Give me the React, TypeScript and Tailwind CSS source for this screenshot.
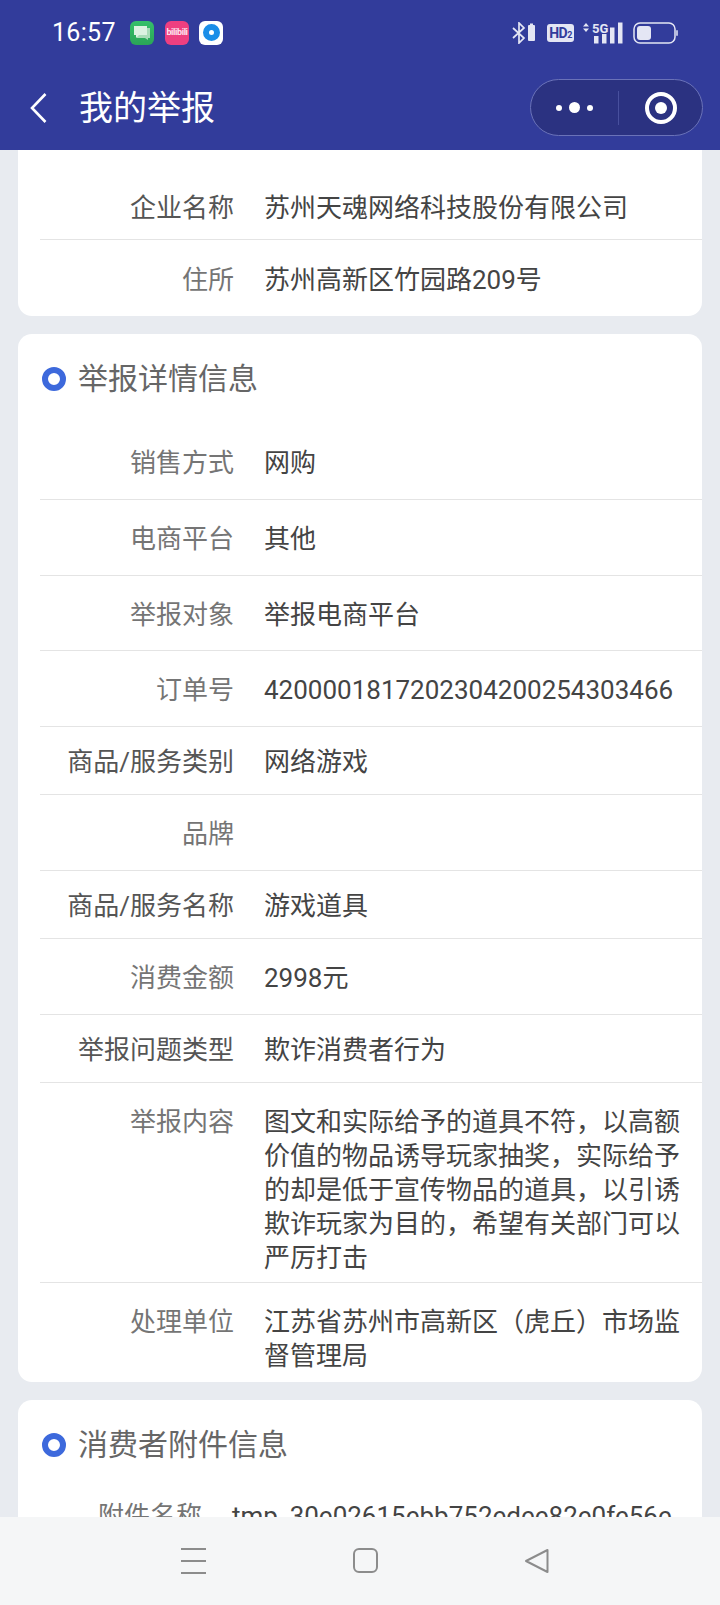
const rowsTop = [
  { label: "企业名称", value: "苏州天魂网络科技股份有限公司", size: "h-[76px] pt-[12px]", textColor: "text-[#555]" },
  { label: "住所", value: "苏州高新区竹园路209号", size: "h-[76px] pt-[3px]", last: true },
];

const rowsDetail = [
  { label: "销售方式", value: "网购", size: "h-[76px] pt-[3px]" },
  { label: "电商平台", value: "其他", size: "h-[76px] pt-[3px]" },
  { label: "举报对象", value: "举报电商平台", size: "h-[75px] pt-[3px]" },
  { label: "订单号", value: "4200001817202304200254303466", size: "h-[76px] pt-[3px]" },
  { label: "商品/服务类别", value: "网络游戏", size: "h-[68px] pt-[3px]", textColor: "text-[#555]" },
  { label: "品牌", value: "", size: "h-[76px] pt-[3px]" },
  { label: "商品/服务名称", value: "游戏道具", size: "h-[68px] pt-[3px]", textColor: "text-[#555]" },
  { label: "消费金额", value: "2998元", size: "h-[76px] pt-[3px]" },
  { label: "举报问题类型", value: "欺诈消费者行为", size: "h-[68px] pt-[3px]", textColor: "text-[#555]" },
  {
    label: "举报内容",
    value: "图文和实际给予的道具不符，以高额价值的物品诱导玩家抽奖，实际给予的却是低于宣传物品的道具，以引诱欺诈玩家为目的，希望有关部门可以严厉打击",
    size: "h-[200px] pt-[22px]",
    multi: true,
  },
  {
    label: "处理单位",
    value: "江苏省苏州市高新区（虎丘）市场监督管理局",
    size: "h-[99px] pt-[22px]",
    multi: true,
    last: true,
  },
];

type RowData = {
  label: string;
  value: string;
  size: string;
  textColor?: string;
  multi?: boolean;
  last?: boolean;
};

const Row = ({ label, value, size, textColor, multi, last }: RowData) => (
  <div
    className={`ml-[22px] flex ${size} ${multi ? "items-start" : "items-center"} ${
      last ? "" : "border-b-[1.5px] border-[#e4e4e4]"
    }`}
  >
    <div className={`w-[194px] shrink-0 text-right ${textColor ?? "text-[#757575]"}`}>{label}</div>
    <div className="ml-[30px] flex-1 pr-[20px] text-[#444]">{value}</div>
  </div>
);

const SectionTitle = ({ title, height }: { title: string; height: string }) => (
  <div className={`flex ${height} items-center pl-[24px]`}>
    <span className="h-[24px] w-[24px] rounded-full border-[6px] border-[#3d69dc]" />
    <span className="ml-[12px] text-[30px] text-[#666]">{title}</span>
  </div>
);

const StatusBar = () => (
  <div className="flex h-[65px] items-center pl-[52px] pr-[42px] text-white">
    <span className="w-[62px] text-[25px] leading-none tracking-[0.3px]">16:57</span>

    {/* App notifications */}
    <div className="ml-[16px] flex gap-[11px]">
      <span className="flex h-[24px] w-[24px] items-center justify-center rounded-[6px] bg-gradient-to-b from-[#35c06a] to-[#2aa457]">
        <svg width="18" height="16" viewBox="0 0 18 16">
          <path d="M4 3h13v10h-2v2l-3-2H4z" fill="#a9dcb9" />
          <path d="M1 1h13v9H6l-3 3v-3H1z" fill="#dcf2e2" />
        </svg>
      </span>
      <span className="flex h-[24px] w-[24px] items-center justify-center overflow-hidden rounded-[6px] bg-[#ee3f80] text-[9px] font-bold leading-none tracking-[-0.4px] text-[#fde3ee]">
        bilibili
      </span>
      <span className="ml-[-1px] flex h-[24px] w-[24px] items-center justify-center rounded-[6px] bg-white">
        <span className="h-[17px] w-[17px] rounded-full border-[6px] border-[#1a8ee8] bg-white" />
      </span>
    </div>

    {/* System icons */}
    <div className="ml-auto flex items-center">
      <svg width="24" height="22" viewBox="0 0 24 22" fill="none">
        <path d="M1 6l11 10-5 5V1l5 5L1 16" stroke="#e4e6f4" strokeWidth="1.7" />
        <rect x="16" y="3" width="7" height="16" rx="1" fill="#e4e6f4" />
        <rect x="18" y="1.5" width="3" height="2" fill="#e4e6f4" />
      </svg>
      <span className="ml-[11px] flex h-[18px] w-[27px] items-center justify-center rounded-[3px] bg-[#e4e6f4] text-[14px] font-bold leading-none tracking-[-0.5px] text-[#323c9b]">
        HD<span className="mt-[5px] text-[9px]">2</span>
      </span>
      <svg className="ml-[9px]" width="40" height="22" viewBox="0 0 40 22" fill="#e4e6f4">
        <path d="M0 4.5L3 1l3 3.5zM0 6.5L3 10l3-3.5z" />
        <text x="9" y="10.5" fontSize="13" fontWeight="700" fontFamily="Roboto">5G</text>
        <rect x="11" y="14" width="4.5" height="7.5" />
        <rect x="19" y="12" width="4.5" height="9.5" />
        <rect x="27" y="5.5" width="4.5" height="16" />
        <rect x="35" y="0.5" width="4.5" height="21" />
      </svg>
      <svg className="ml-[10px]" width="45" height="22" viewBox="0 0 45 22" fill="none">
        <rect x="1" y="1" width="41" height="20" rx="6" stroke="#e4e6f4" strokeWidth="1.5" />
        <rect x="4" y="4" width="14" height="14" rx="3" fill="#e4e6f4" />
        <rect x="43" y="8" width="2" height="6" rx="1" fill="#b9bde0" />
      </svg>
    </div>
  </div>
);

const NavBar = () => (
  <div className="flex h-[85px] items-start pl-[30px] pr-[17px] pt-[14px] text-white">
    <svg className="mt-[14px]" width="17" height="30" viewBox="0 0 17 30" fill="none">
      <path d="M15.5 1L2 15l13.5 14" stroke="white" strokeWidth="2.6" />
    </svg>
    <span className="ml-[32px] mt-[6px] text-[34px] leading-[46px]">我的举报</span>

    {/* Capsule */}
    <div className="ml-auto flex h-[57px] w-[173px] items-center rounded-full border border-[#6a72b8] bg-[#2b3281]">
      <div className="flex w-[87px] items-center justify-center gap-[7px]">
        <span className="h-[6px] w-[6px] rounded-full bg-white" />
        <span className="h-[11px] w-[11px] rounded-full bg-white" />
        <span className="h-[6px] w-[6px] rounded-full bg-white" />
      </div>
      <span className="h-[34px] w-px bg-[#48509e]" />
      <div className="flex flex-1 items-center justify-center">
        <span className="flex h-[32px] w-[32px] items-center justify-center rounded-full border-[4px] border-white">
          <span className="h-[12px] w-[12px] rounded-full bg-white" />
        </span>
      </div>
    </div>
  </div>
);

const App = () => {
  return (
    <div className="flex h-[1605px] w-[720px] flex-col overflow-hidden bg-[#e8ebf0] font-['Roboto','Noto_Sans_CJK_SC',sans-serif] text-[26px] leading-[34px]">
      <div className="bg-[#323c9b]">
        <StatusBar />
        <NavBar />
      </div>

      {/* Scrolled content */}
      <div className="flex-1 overflow-hidden px-[18px]">
        <div className="rounded-b-[14px] bg-white pt-[14px]">
          {rowsTop.map((row) => (
            <Row key={row.label} {...row} />
          ))}
        </div>

        <div className="mt-[18px] rounded-[14px] bg-white">
          <SectionTitle title="举报详情信息" height="h-[90px]" />
          {rowsDetail.map((row) => (
            <Row key={row.label} {...row} />
          ))}
        </div>

        <div className="mt-[18px] rounded-[14px] bg-white">
          <SectionTitle title="消费者附件信息" height="h-[89px]" />
          <div className="ml-[22px] flex items-start pt-[10px]">
            <div className="w-[162px] shrink-0 text-right text-[#757575]">附件名称</div>
            <div className="ml-[30px] flex-1 break-all pr-[20px] text-[#444]">
              tmp_30e02615ebb752edee82e0fe56e
            </div>
          </div>
        </div>
      </div>

      {/* System navigation */}
      <div className="flex h-[88px] items-start bg-[#f5f6f7] pt-[31px]">
        <div className="ml-[181px] flex h-[26px] w-[25px] flex-col justify-between">
          <span className="h-[2px] bg-[#8c8c8c]" />
          <span className="h-[2px] bg-[#8c8c8c]" />
          <span className="h-[2px] bg-[#8c8c8c]" />
        </div>
        <span className="ml-[147px] h-[25px] w-[25px] rounded-[6px] border-2 border-[#8c8c8c]" />
        <svg className="ml-[146px]" width="25" height="26" viewBox="0 0 25 26" fill="none">
          <path d="M23.5 2v22L2 13z" stroke="#8c8c8c" strokeWidth="2" strokeLinejoin="round" />
        </svg>
      </div>
    </div>
  );
};

export default App;
